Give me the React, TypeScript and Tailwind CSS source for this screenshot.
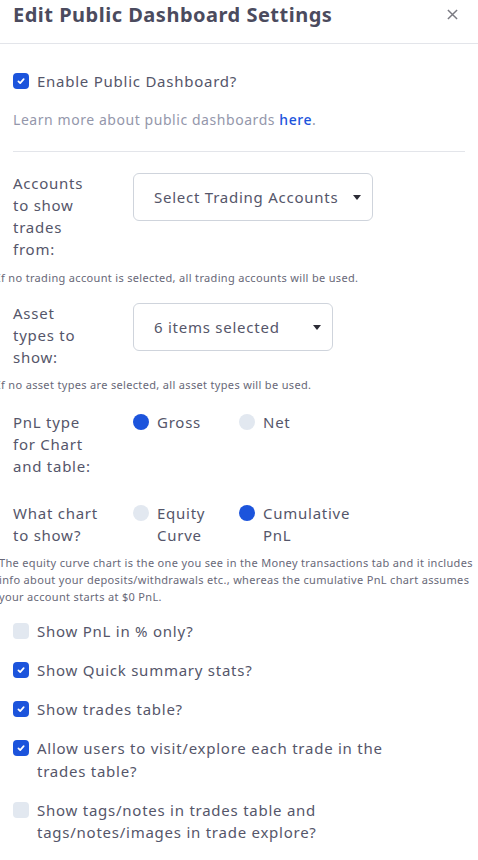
import React from 'react';

const font = { fontFamily: '"Noto Sans", "Open Sans", sans-serif' };

function Check({ checked }: { checked: boolean }) {
  return (
    <span className={`mt-[3px] w-4 h-4 shrink-0 rounded-[4px] flex items-center justify-center ${checked ? 'bg-[#1c54dc]' : 'bg-[#e2e8f0]'}`}>
      {checked && (
        <svg width="10" height="10" viewBox="0 0 10 10" fill="none">
          <path d="M2.4 5.3l1.8 1.8 3.5-4" stroke="white" strokeWidth="1.7" strokeLinecap="round" strokeLinejoin="round" />
        </svg>
      )}
    </span>
  );
}

function CheckRow({ checked, lines }: { checked: boolean; lines: string[] }) {
  return (
    <div className="flex gap-2">
      <Check checked={checked} />
      <span>
        {lines.map((l, i) => (
          <span key={i} className="block whitespace-nowrap">{l}</span>
        ))}
      </span>
    </div>
  );
}

function Radio({ on, lines }: { on: boolean; lines: string[] }) {
  return (
    <div className="w-[106px] flex gap-2">
      <span className={`mt-[3px] w-4 h-4 rounded-full shrink-0 ${on ? 'bg-[#1c54dc]' : 'bg-[#e2e8f0]'}`} />
      <span>
        {lines.map((l, i) => (
          <span key={i} className="block whitespace-nowrap">{l}</span>
        ))}
      </span>
    </div>
  );
}

function Label({ lines }: { lines: string[] }) {
  return (
    <div className="w-[120px] shrink-0">
      {lines.map((l, i) => (
        <span key={i} className="block whitespace-nowrap">{l}</span>
      ))}
    </div>
  );
}

function Select({ text, width }: { text: string; width: string }) {
  return (
    <div className={`${width} h-[48px] mt-[1px] border border-[#cfd4dc] rounded-[6px] flex items-center justify-between pl-5 pr-[11px]`}>
      <span className="whitespace-nowrap tracking-[0.05em]">{text}</span>
      <svg width="8" height="5" viewBox="0 0 8 5"><path d="M0 0h8L4 5z" fill="#2b2b35" /></svg>
    </div>
  );
}

export default function App() {
  return (
    <div className="w-[478px] h-[860px] bg-white overflow-hidden" style={font}>
      <div className="h-[44px] border-b border-[#e3e5ea] flex items-start justify-between pl-[13px] pr-[20px] pt-[1px]">
        <h1 className="text-[20px] leading-[28px] font-bold tracking-[0.025em] text-[#4b4b5e]">Edit Public Dashboard Settings</h1>
        <svg width="11" height="11" viewBox="0 0 12 12" className="mt-[8px]">
          <path d="M1 1l10 10M11 1L1 11" stroke="#7a7a82" strokeWidth="1.6" />
        </svg>
      </div>

      <div className="px-[13px] text-[#55566a] text-[15px] leading-[22px] tracking-[0.05em]">
        <div className="mt-[26px]">
          <CheckRow checked lines={['Enable Public Dashboard?']} />
        </div>
        <p className="mt-[18px] text-[14px] leading-[20px] text-[#9497ab] tracking-[0.04em]">
          Learn more about public dashboards <span className="text-[#1c54dc] font-medium">here</span>.
        </p>
        <div className="mt-[21px] border-t border-[#e3e5ea]" />

        <div className="mt-[20px] flex">
          <Label lines={['Accounts', 'to show', 'trades', 'from:']} />
          <Select text="Select Trading Accounts" width="w-[240px]" />
        </div>
        <p className="mt-[10px] -ml-[16px] text-[11px] leading-[16px] tracking-[0.03em] text-[#686878] whitespace-nowrap">
          If no trading account is selected, all trading accounts will be used.
        </p>

        <div className="mt-[16px] flex">
          <Label lines={['Asset', 'types to', 'show:']} />
          <Select text="6 items selected" width="w-[200px]" />
        </div>
        <p className="mt-[9px] -ml-[16px] text-[11px] leading-[16px] tracking-[0.03em] text-[#686878] whitespace-nowrap">
          If no asset types are selected, all asset types will be used.
        </p>

        <div className="mt-[18px] flex">
          <Label lines={['PnL type', 'for Chart', 'and table:']} />
          <Radio on lines={['Gross']} />
          <Radio on={false} lines={['Net']} />
        </div>

        <div className="mt-[25px] flex">
          <Label lines={['What chart', 'to show?']} />
          <Radio on={false} lines={['Equity', 'Curve']} />
          <Radio on lines={['Cumulative', 'PnL']} />
        </div>
        <p className="mt-[8px] -ml-[14px] text-[11px] leading-[17px] tracking-[0.03em] text-[#686878] whitespace-nowrap">
          The equity curve chart is the one you see in the Money transactions tab and it includes
          <br />
          info about your deposits/withdrawals etc., whereas the cumulative PnL chart assumes
          <br />
          your account starts at $0 PnL.
        </p>

        <div className="mt-[15px] flex flex-col gap-[16.5px] leading-[22.5px]">
          <CheckRow checked={false} lines={['Show PnL in % only?']} />
          <CheckRow checked lines={['Show Quick summary stats?']} />
          <CheckRow checked lines={['Show trades table?']} />
          <CheckRow checked lines={['Allow users to visit/explore each trade in the', 'trades table?']} />
          <CheckRow checked={false} lines={['Show tags/notes in trades table and', 'tags/notes/images in trade explore?']} />
        </div>
      </div>
    </div>
  );
}
